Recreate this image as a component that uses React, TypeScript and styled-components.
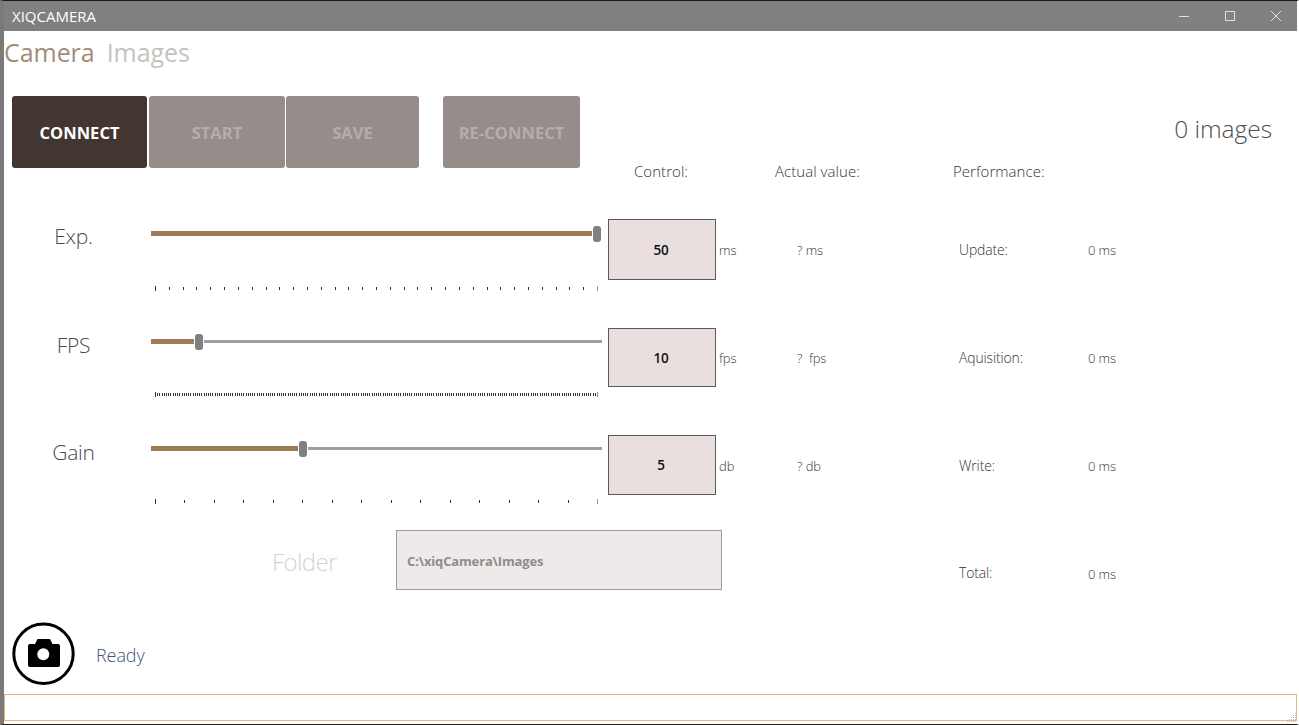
import React from "react";
import styled, { createGlobalStyle } from "styled-components";

const Global = createGlobalStyle`
  html, body { margin: 0; padding: 0; background: #fff; }
  body { font-family: "Open Sans", "Noto Sans", sans-serif; overflow: hidden; }
`;

const Win = styled.div`
  width: 1299px;
  height: 725px;
  box-sizing: border-box;
  border-top: 1px solid #1a1a1a;
  border-bottom: 1px solid #1a1a1a;
  border-left: 4px solid #7a7a7a;
  border-right: 2px solid #fff;
  display: flex;
  flex-direction: column;
  background: #fff;
  position: relative;
  overflow: hidden;
`;

const DesktopSliver = styled.div`
  position: absolute;
  left: -4px;
  top: 266px;
  width: 2px;
  height: 30px;
  background: linear-gradient(#999 0%, #a9b78a 30%, #6fbf3a 60%, #4a4a4a 100%);
`;

const TitleBar = styled.div`
  height: 30px;
  flex: none;
  background: #808080;
  display: flex;
  align-items: center;
  justify-content: space-between;
  padding-left: 8px;
  padding-right: 18px;
  margin-right: -2px;
`;

const Title = styled.span`
  font-size: 15px;
  color: #fff;
`;

const WinButtons = styled.div`
  display: flex;
  gap: 36px;
  align-items: center;
`;

const TabBar = styled.div`
  display: flex;
  gap: 12px;
  height: 65px;
  flex: none;
  padding-top: 3px;
  box-sizing: border-box;
`;

const Tab = styled.span<{ $active?: boolean }>`
  font-size: 25px;
  line-height: 36px;
  height: 36px;
  font-weight: 400;
  letter-spacing: -0.05px;
  color: ${(p) => (p.$active ? "#a28c79" : "#c6c2be")};
`;

const Toolbar = styled.div`
  display: flex;
  height: 72px;
  flex: none;
  padding-left: 8px;
  align-items: stretch;
`;

const ActionButton = styled.div<{ $w: number; $on?: boolean; $gap?: number }>`
  width: ${(p) => p.$w}px;
  margin-left: ${(p) => p.$gap ?? 0}px;
  border-radius: 3px;
  display: flex;
  align-items: center;
  justify-content: center;
  font-size: 16.500px;
  font-weight: 700;
  letter-spacing: 0.05px;
  background: ${(p) => (p.$on ? "#433532" : "#968c89")};
  color: ${(p) => (p.$on ? "#ffffff" : "#b4aeab")};
`;

const Count = styled.div`
  margin-left: auto;
  margin-right: 25px;
  font-size: 24.500px;
  font-weight: 300;
  color: #4d4d4d;
  line-height: 32px;
  margin-top: 17px;
  letter-spacing: -0.05px;
`;

const HeaderRow = styled.div`
  display: grid;
  grid-template-columns: 630px 141px 178px 1fr;
  height: 16px;
  margin-top: -5px;
  flex: none;
`;

const HeaderCell = styled.span`
  font-size: 15px;
  line-height: 16px;
  font-weight: 300;
  color: #333;
  letter-spacing: 0.05px;
`;

const Rows = styled.div`
  display: flex;
  flex-direction: column;
  margin-top: 40px;
`;

const Row = styled.div<{ $h: number; $boxH: number }>`
  display: grid;
  grid-template-columns: 147px 457px 108px 81px 162px 129px 1fr;
  grid-template-rows: ${(p) => p.$boxH}px;
  height: ${(p) => p.$h}px;
  flex: none;
`;

const BigLabel = styled.div`
  font-size: 21px;
  font-weight: 300;
  color: #4a4a4a;
  text-align: center;
  padding-right: 8px;
  padding-top: 2px;
  line-height: 30px;
  letter-spacing: -0.3px;
`;

const SliderWrap = styled.div<{ $top: number }>`
  display: flex;
  flex-direction: column;
  padding-top: ${(p) => p.$top}px;
`;

const Track = styled.div`
  display: flex;
  align-items: flex-start;
  width: 451px;
  height: 16px;
  gap: 1px;
  flex: none;
`;

const Fill = styled.div`
  height: 5px;
  margin-top: 5px;
  background: #9c7b55;
  flex: none;
`;

const Rest = styled.div`
  height: 3px;
  margin-top: 6px;
  background: #9e9e9e;
  flex: 1;
`;

const Thumb = styled.div`
  width: 8px;
  height: 16px;
  border-radius: 3px;
  background: #808080;
  flex: none;
`;

const Ticks = styled.svg<{ $gap: number }>`
  display: block;
  flex: none;
  margin-top: ${(p) => p.$gap}px;
  margin-left: 4px;
  shape-rendering: crispEdges;
`;

const ValueBox = styled.div`
  box-sizing: border-box;
  border: 1px solid #5a5a5a;
  background: #e8dfde;
  display: flex;
  align-items: center;
  justify-content: center;
  padding-right: 2px;
  font-size: 13.500px;
  font-weight: 600;
  color: #111;
  letter-spacing: -0.3px;
`;

const Small = styled.div<{ $h?: number; $shift?: number; $size?: number }>`
  font-size: ${(p) => p.$size ?? 13}px;
  font-weight: 300;
  line-height: ${(p) => p.$h ?? 60}px;
  color: #333;
  letter-spacing: -0.1px;
  white-space: pre;
  padding-left: ${(p) => p.$shift ?? 0}px;
`;

const FolderRow = styled.div`
  display: grid;
  grid-template-columns: 268px 124px 326px 237px 129px 1fr;
  grid-template-rows: 60px;
  height: 60px;
  flex: none;
`;

const FolderLabel = styled.div`
  font-size: 24px;
  font-weight: 300;
  line-height: 64px;
  color: #cfd3d8;
  letter-spacing: -0.6px;
`;

const FolderBox = styled.div`
  box-sizing: border-box;
  border: 1px solid #9c9c9c;
  background: #efe9e9;
  display: flex;
  align-items: center;
  padding-left: 10px;
  padding-top: 2px;
  font-size: 13px;
  font-weight: 700;
  letter-spacing: -0.15px;
  color: #8f8b8b;
`;

const StatusRow = styled.div`
  display: flex;
  align-items: center;
  margin-top: 32px;
  padding-left: 8px;
  gap: 20px;
  flex: none;
`;

const Ready = styled.span`
  font-size: 18px;
  font-weight: 300;
  color: #3f5870;
  letter-spacing: -0.1px;
  margin-top: 1px;
`;

const LogBox = styled.div`
  margin-top: 8px;
  height: 27px;
  box-sizing: border-box;
  border: 1px solid #e8b878;
  flex: none;
  position: relative;
`;

const Grip = styled.svg`
  position: absolute;
  right: -1px;
  bottom: -3px;
  shape-rendering: crispEdges;
`;

const tickXs = (n: number) =>
  Array.from({ length: n + 1 }, (_, i) => Math.round((i * 442) / n));

const TickMarks: React.FC<{ n: number; gap: number }> = ({ n, gap }) => (
  <Ticks width="444" height="5" $gap={gap}>
    {tickXs(n).map((x, i) => (
      <rect
        key={i}
        x={x}
        y={i === 0 || i === n ? 0 : 1}
        width="1"
        height={i === 0 || i === n ? 5 : 3}
        fill={i === n ? "#999" : "#333"}
      />
    ))}
  </Ticks>
);

const Slider: React.FC<{ fill: number; n: number; top: number; gap: number }> = ({ fill, n, top, gap }) => (
  <SliderWrap $top={top}>
    <Track>
      <Fill style={{ width: fill }} />
      <Thumb />
      <Rest />
    </Track>
    <TickMarks n={n} gap={gap} />
  </SliderWrap>
);

const CameraBadge = () => (
  <svg width="64" height="64" viewBox="0 0 64 64">
    <circle cx="31.500" cy="31.700" r="29.700" fill="none" stroke="#000" strokeWidth="3" />
    <path
      d="M18 22h5l2.500-5h12.500l2.500 5h5.500a2 2 0 0 1 2 2v19a2 2 0 0 1-2 2h-28a2 2 0 0 1-2-2v-19a2 2 0 0 1 2-2z"
      fill="#000"
    />
    <circle cx="31.300" cy="32.300" r="6" fill="#fff" />
  </svg>
);

const data = [
  { label: "Exp.", fill: 441, n: 32, val: "50", unit: "ms", act: "? ms", perf: "Update:", h: 109, boxH: 61, top: 7, gap: 44 },
  { label: "FPS", fill: 43, n: 200, val: "10", unit: "fps", act: "?  fps", perf: "Aquisition:", h: 107, boxH: 59, top: 6, gap: 42 },
  { label: "Gain", fill: 147, n: 15, val: "5", unit: "db", act: "? db", perf: "Write:", h: 95, boxH: 60, top: 6, gap: 42 },
];

export default function App() {
  return (
    <Win>
      <Global />
      <DesktopSliver />
      <TitleBar>
        <Title>XIQCAMERA</Title>
        <WinButtons>
          <svg width="10" height="10" viewBox="0 0 10 10" shapeRendering="crispEdges">
            <rect x="0" y="5" width="10" height="1" fill="#e0e0e0" />
          </svg>
          <svg width="10" height="10" viewBox="0 0 10 10" shapeRendering="crispEdges">
            <rect x="0.500" y="0.500" width="9" height="9" fill="none" stroke="#e0e0e0" />
          </svg>
          <svg width="10" height="10" viewBox="0 0 10 10">
            <path d="M0 0L10 10M10 0L0 10" stroke="#e0e0e0" strokeWidth="1" />
          </svg>
        </WinButtons>
      </TitleBar>
      <TabBar>
        <Tab $active>Camera</Tab>
        <Tab>Images</Tab>
      </TabBar>
      <Toolbar>
        <ActionButton $w={135} $on>CONNECT</ActionButton>
        <ActionButton $w={136} $gap={2}>START</ActionButton>
        <ActionButton $w={133} $gap={1}>SAVE</ActionButton>
        <ActionButton $w={137} $gap={24}>RE-CONNECT</ActionButton>
        <Count>0 images</Count>
      </Toolbar>
      <HeaderRow>
        <span />
        <HeaderCell>Control:</HeaderCell>
        <HeaderCell>Actual value:</HeaderCell>
        <HeaderCell>Performance:</HeaderCell>
      </HeaderRow>
      <Rows>
        {data.map((d) => (
          <Row key={d.label} $h={d.h} $boxH={d.boxH}>
            <BigLabel>{d.label}</BigLabel>
            <Slider fill={d.fill} n={d.n} top={d.top} gap={d.gap} />
            <ValueBox>{d.val}</ValueBox>
            <Small $h={d.boxH + 2} $shift={3}>{d.unit}</Small>
            <Small $h={d.boxH + 2}>{d.act}</Small>
            <Small $h={d.boxH + 1} $size={13.9}>{d.perf}</Small>
            <Small $h={d.boxH + 2}>0 ms</Small>
          </Row>
        ))}
        <FolderRow>
          <span />
          <FolderLabel>Folder</FolderLabel>
          <FolderBox>C:\xiqCamera\Images</FolderBox>
          <span />
          <Small $h={86} $size={13.9}>Total:</Small>
          <Small $h={88}>0 ms</Small>
        </FolderRow>
      </Rows>
      <StatusRow>
        <CameraBadge />
        <Ready>Ready</Ready>
      </StatusRow>
      <LogBox>
        <Grip width="11" height="11">
          {[[9, 1], [9, 3], [7, 3], [9, 5], [7, 5], [5, 5], [9, 7], [7, 7], [5, 7], [3, 7], [9, 9], [7, 9], [5, 9], [3, 9], [1, 9]].map(([x, y], i) => (
            <rect key={i} x={x} y={y} width="1" height="1" fill="#b8c0d0" />
          ))}
        </Grip>
      </LogBox>
    </Win>
  );
}
